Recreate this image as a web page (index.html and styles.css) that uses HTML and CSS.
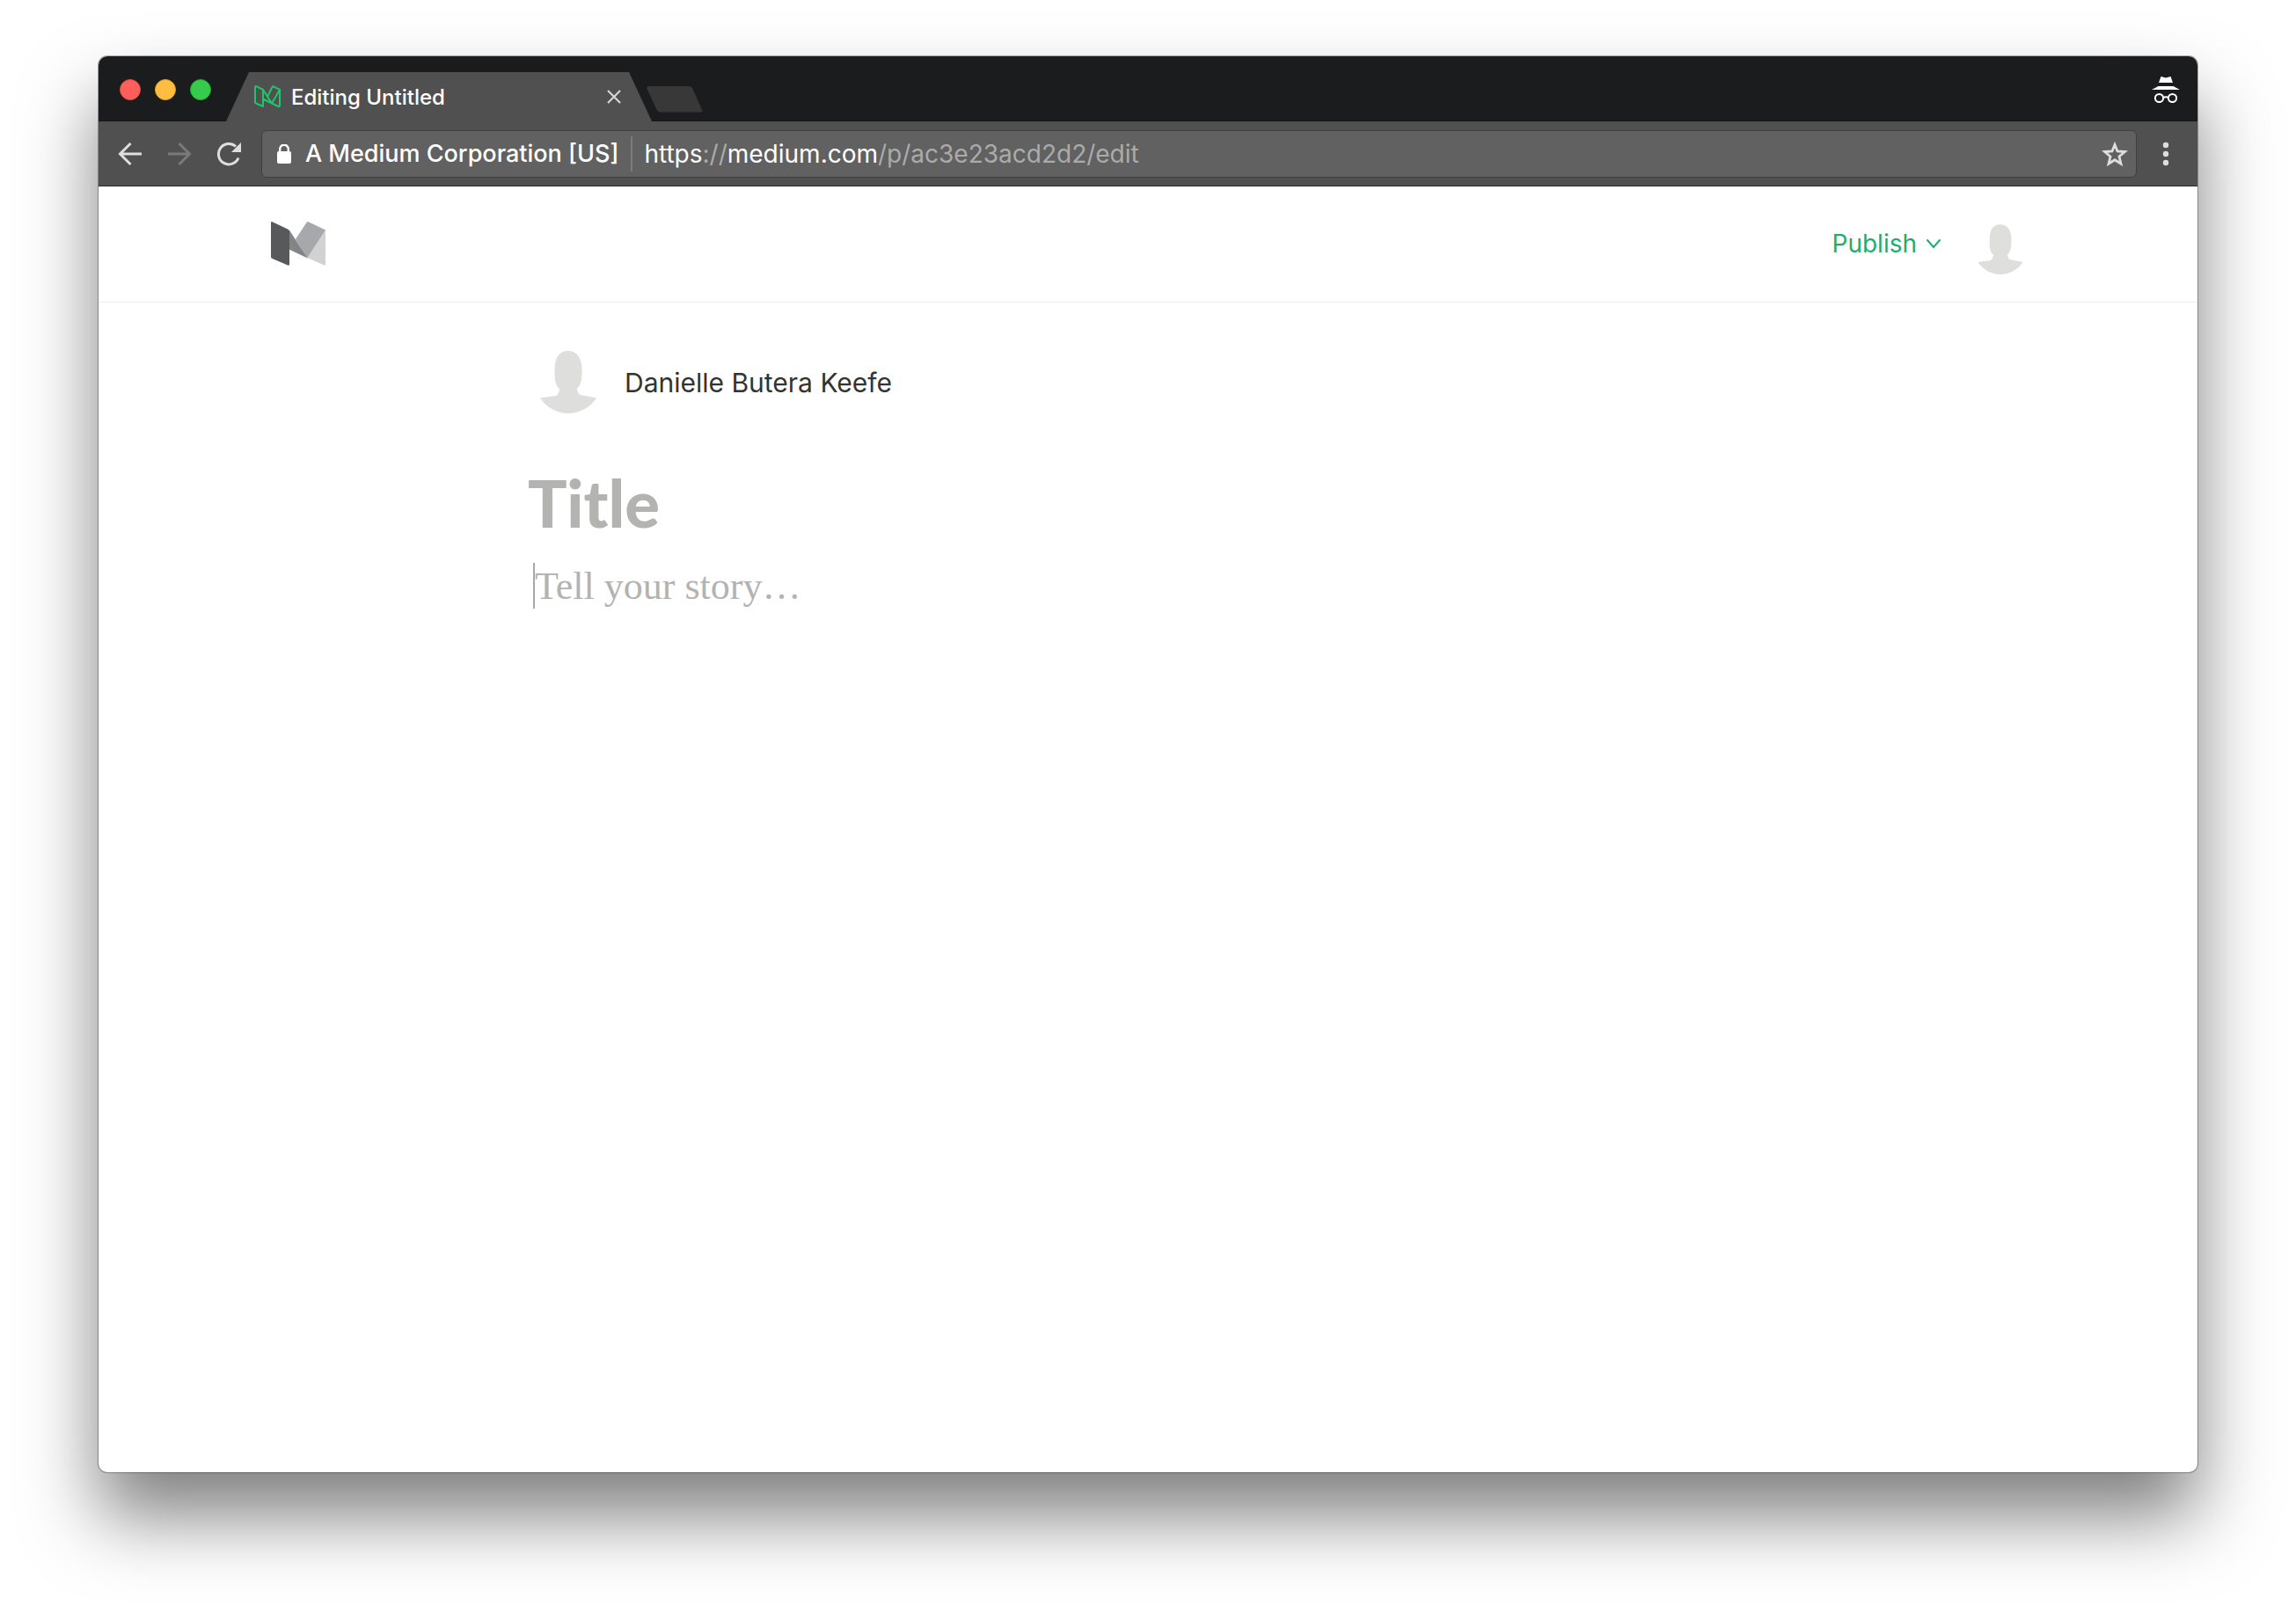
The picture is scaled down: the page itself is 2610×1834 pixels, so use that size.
FILE: index.html
```html
<!DOCTYPE html>
<html lang="en">
<head>
<meta charset="utf-8">
<title>Editing Untitled</title>
<link rel="stylesheet" href="styles.css">
</head>
<body>
<div class="window">
  <div class="tabbar">
    <div class="lights">
      <button class="light light-close" aria-label="Close window"></button>
      <button class="light light-min" aria-label="Minimize window"></button>
      <button class="light light-max" aria-label="Zoom window"></button>
    </div>
    <div class="tab">
      <svg class="favicon" width="32" height="28" viewBox="0 0 32 28" fill="none" stroke="#1fc46c" stroke-width="2" stroke-linejoin="round"><path d="M2 3.500Q2 1.500 4 2.400L11 6V25L3 21.500Q2 21 2 20ZM11 6L21 21.500L11 16.500M16 14L21.500 3Q22 2 23 2.400L30 6L21 21.500ZM30 6V24Q30 25.500 28.500 25L21 21.500"/></svg>
      <span class="tab-title">Editing Untitled</span>
      <button class="tab-close" aria-label="Close tab"><svg width="16" height="16" viewBox="0 0 16 16" fill="none" stroke="#d5d5d5" stroke-width="2.200"><path d="M1 1L15 15M15 1L1 15"/></svg></button>
    </div>
    <button class="newtab" aria-label="New tab"><svg width="64" height="30" viewBox="0 0 64 30"><path d="M2 0H48Q51 0 52.500 3L63 27Q64 29.500 62 29.500H16Q13 29.500 11.500 27L0.500 3Q-.5 0 2 0Z" fill="#383838"/></svg></button>
    <svg class="incognito" width="32" height="30" viewBox="0 0 32 30"><path d="M10.500 0L16 1.500L21.500 0L24 7H8ZM7.500 11H24.500L32 15H0Z" fill="#fff"/><g fill="none" stroke="#fff" stroke-width="2"><circle cx="8.500" cy="24.500" r="4.600"/><circle cx="23.500" cy="24.500" r="4.600"/><path d="M13 24Q16 22.500 19 24"/></g></svg>
  </div>
  <div class="toolbar">
    <button class="tool" aria-label="Back"><svg width="28" height="28" viewBox="0 0 28 28" fill="none" stroke="#dedede" stroke-width="3"><path d="M27 14H3M14.500 2L2.500 14L14.500 26"/></svg></button>
    <button class="tool" aria-label="Forward" disabled><svg width="28" height="28" viewBox="0 0 28 28" fill="none" stroke="#7a7a7a" stroke-width="3"><path d="M1 14H25M13.500 2L25.500 14L13.500 26"/></svg></button>
    <button class="tool" aria-label="Reload"><svg width="28" height="28" viewBox="0 0 28 28"><path d="M25 18.500A11.700 11.700 0 1 1 22 5.500" fill="none" stroke="#dedede" stroke-width="3"/><path d="M28 1V12H17Z" fill="#dedede"/></svg></button>
    <div class="omnibox">
      <button class="site">
        <svg width="16" height="22" viewBox="0 0 16 22"><path d="M3.200 9V5.500a4.800 4.800 0 0 1 9.600 0V9" fill="none" stroke="#fff" stroke-width="2.400"/><rect y="8" width="16" height="14" rx="2" fill="#fff"/></svg>
        <span>A Medium Corporation [US]</span>
      </button>
      <div class="url" role="textbox" aria-label="Address" contenteditable="true" spellcheck="false">https<span class="dim">://</span>medium.com<span class="dim">/p/ac3e23acd2d2/edit</span></div>
      <button class="star" aria-label="Bookmark this page"><svg width="30" height="28" viewBox="0 0 30 28"><path d="M15 3.500L18 11L26.500 11.500L20 17L22 25.200L15 20.700L8 25.200L10 17L3.500 11.500L12 11Z" fill="none" stroke="#dedede" stroke-width="2.800"/></svg></button>
    </div>
    <button class="menu" aria-label="Menu"><svg width="8" height="28" viewBox="0 0 8 28" fill="#dedede"><circle cx="4" cy="4" r="3.200"/><circle cx="4" cy="14" r="3.200"/><circle cx="4" cy="24" r="3.200"/></svg></button>
  </div>
  <header class="header">
    <div class="header-inner">
      <a class="logo" href="#" aria-label="Medium"><svg width="62" height="50" viewBox="0 0 62 50"><path d="M41 41L62 9V48.500Q62 50 60.500 49.500Z" fill="#d1d2d4"/><path d="M28 20L40.500 1Q41.500-.5 43 .4L62 9.500L41 41.500Z" fill="#a7a8ac"/><path d="M20.500 9L41.500 41.500L20.500 31.500Z" fill="#838487"/><path d="M0 1.500Q0-.5 2 .4L19 8.500Q21 9.500 21 11V48.500Q21 50.500 19 49.500L1.500 42Q0 41.300 0 40Z" fill="#58595b"/></svg></a>
      <button class="publish">Publish <svg width="18" height="12" viewBox="0 0 18 12" fill="none" stroke="#1cae6e" stroke-width="2"><path d="M1.500 1.500L9 10L16.500 1.500"/></svg></button>
      <a class="me" href="#" aria-label="Profile"><svg width="64" height="64" viewBox="0 0 80 80"><use href="#person"/></svg></a>
    </div>
  </header>
  <main class="story">
    <div class="author">
      <svg width="80" height="80" viewBox="0 0 80 80"><path id="person" d="M39.500 9C49 9 55.500 16 55.500 30C55.500 40 55 45 52 49.500L50 51.500Q50 57 54 59L72 62.500C65 73 53 80 40 80C27 80 15 73 8 62.500L26 60Q30 57 30 52L28 50C25 46 24.500 41 24.500 31C24.500 16 30 9 39.500 9Z" fill="#dededd"/></svg>
      <span class="name">Danielle Butera Keefe</span>
    </div>
    <input class="title" type="text" placeholder="Title" aria-label="Title">
    <div class="body-line"><span class="caret"></span><input class="body-text" type="text" placeholder="Tell your story…" aria-label="Tell your story"></div>
  </main>
</div>
</body>
</html>
```
FILE: styles.css
```css
* { box-sizing: border-box; }
body { margin: 0; background: #fff; font-family: Inter, "Liberation Sans", sans-serif; overflow-x: hidden; }
button { border: 0; padding: 0; background: none; font: inherit; color: inherit; display: flex; align-items: center; }
svg { display: block; flex: none; }

.window {
  margin: 64px 112px 160px;
  min-height: calc(100vh - 224px);
  border-radius: 10px;
  overflow: hidden;
  background: #fff;
  box-shadow: 0 0 0 1px rgba(0, 0, 0, .3), 0 50px 84px rgba(0, 0, 0, .5);
}

.tabbar { display: flex; height: 74px; background: #1b1c1e; border-bottom: 1px solid #141415; color: #fff; }
.lights { display: flex; gap: 16px; padding: 26px 17px 0 24px; }
.light { width: 24px; height: 24px; border-radius: 50%; }
.light-close { background: #fe5f5a; border: 1px solid #e14942; }
.light-min { background: #ffbe42; border: 1px solid #dfa023; }
.light-max { background: #36cb4b; border: 1px solid #1dad2b; }
.tab {
  display: flex; align-items: center;
  width: 484px; height: 56px; margin-top: 18px; padding: 0 35px 0 31px;
  background: #505050;
  clip-path: polygon(26px 0, 458px 0, 484px 56px, 0 56px);
}
.tab-title { margin-left: 11px; font-size: 24px; font-weight: 500; flex: 1; }
.newtab { align-self: flex-start; margin: 34px auto 0 -6px; }
.incognito { margin: 23px 20px 0 0; }

.toolbar { display: flex; align-items: center; height: 74px; padding: 0 32px 0 22px; background: #505050; border-bottom: 1px solid #2c2c2c; }
.tool { width: 28px; margin-right: 28px; }
.tool + .tool + .tool { margin-right: 23px; }
.omnibox { display: flex; align-items: center; flex: 1; height: 54px; padding: 0 9px 0 17px; background: #616161; border: 1px solid #404040; border-radius: 6px; color: #fff; font-size: 28px; }
.site { gap: 16px; height: 40px; padding-right: 14px; border-right: 2px solid #7c7c7c; font-size: 27px; font-weight: 500; white-space: nowrap; }
.url { flex: 1; margin-left: 13px; white-space: nowrap; }
.dim { color: #ababab; }
.menu { margin-left: 29px; }

.header { height: 132px; padding: 0 24px; border-bottom: 1px solid #eee; }
.header-inner { display: flex; align-items: center; max-width: 2000px; height: 130px; margin: 0 auto; }
.logo { margin: 0 auto 0 3px; }
.publish { gap: 10px; color: #1cae6e; font-size: 28px; }
.me { margin: 6px -1px 0 35px; }

.story { max-width: 1400px; margin: 0 auto; padding-top: 46px; }
.author { display: flex; gap: 24px; height: 82px; padding-left: 1px; }
.name { padding-top: 27px; font-size: 30px; line-height: 36px; color: #333332; }
input { display: block; width: 100%; padding: 0; border: 0; outline: 0; background: none; }
input::placeholder { color: #b3b3b1; opacity: 1; }
.title { height: 90px; margin: 54px 0 0 -5px; font: 900 74px Lato, sans-serif; }
.body-line { display: flex; align-items: center; margin-top: 24px; height: 52px; }
.caret { width: 2px; height: 52px; margin-left: 1px; background: #a8a8a8; }
.body-text { font: 44px "Liberation Serif", serif; }
```
